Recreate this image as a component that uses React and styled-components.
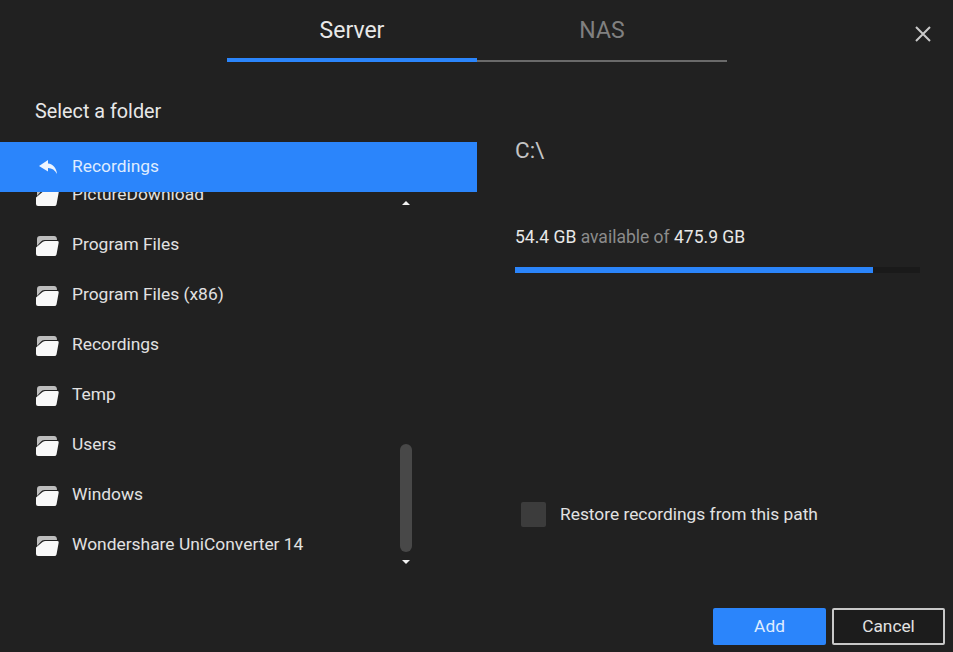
import React from "react";
import styled, { createGlobalStyle } from "styled-components";

const Global = createGlobalStyle`
  html, body { margin: 0; padding: 0; background: #212121; }
  body { font-family: Roboto, "Liberation Sans", sans-serif; }
`;

const Dialog = styled.div`
  position: relative;
  width: 953px;
  height: 652px;
  background: #212121;
  color: #e6e6e6;
  overflow: hidden;
  display: flex;
  flex-direction: column;
`;

const Tabs = styled.div`
  display: flex;
  width: 500px;
  height: 62px;
  margin-left: 227px;
  flex: none;
`;

const Tab = styled.div`
  width: 250px;
  height: 62px;
  box-sizing: border-box;
  padding-top: 17px;
  text-align: center;
  font-size: 23px;
  line-height: 28px;
  color: ${(p) => (p.$active ? "#e8e8e8" : "#808080")};
  border-bottom: ${(p) => (p.$active ? "4px solid #2b85fb" : "2px solid #6a6a6a")};
`;

const Close = styled.button`
  position: absolute;
  top: 25px;
  right: 21px;
  width: 18px;
  height: 18px;
  padding: 0;
  border: 0;
  background: none;
  display: block;
`;

const Body = styled.div`
  display: flex;
  flex: 1;
  min-height: 0;
`;

const Left = styled.div`
  width: 477px;
  flex: none;
  display: flex;
  flex-direction: column;
`;

const Heading = styled.div`
  padding: 38px 0 0 35px;
  height: 42px;
  font-size: 19.8px;
  line-height: 24px;
  color: #e8e8e8;
  flex: none;
`;

const BackRow = styled.div`
  height: 50px;
  box-sizing: border-box;
  padding: 0 0 2px 37px;
  background: #2b85fb;
  display: flex;
  align-items: center;
  gap: 14px;
  font-size: 17.4px;
  color: #dfecff;
  flex: none;
  position: relative;
  z-index: 1;
`;

const ListWrap = styled.div`
  position: relative;
  height: 381px;
  overflow: hidden;
  flex: none;
`;

const List = styled.div`
  margin-top: -23px;
`;

const Row = styled.div`
  height: 50px;
  display: flex;
  align-items: center;
  padding-left: 35px;
  gap: 13px;
  font-size: 17.4px;
  color: #e2e2e2;
`;

const ScrollThumb = styled.div`
  position: absolute;
  left: 400px;
  top: 252px;
  width: 12px;
  height: 108px;
  border-radius: 6px;
  background: #484848;
`;

const ArrowUp = styled.div`
  position: absolute;
  left: 402px;
  top: 9px;
  width: 0;
  height: 0;
  border-left: 4px solid transparent;
  border-right: 4px solid transparent;
  border-bottom: 4px solid #f2f2f2;
`;

const ArrowDown = styled.div`
  position: absolute;
  left: 402px;
  top: 368px;
  width: 0;
  height: 0;
  border-left: 4px solid transparent;
  border-right: 4px solid transparent;
  border-top: 4px solid #f2f2f2;
`;

const Right = styled.div`
  flex: 1;
  display: flex;
  flex-direction: column;
  padding: 75px 33px 0 38px;
`;

const Path = styled.div`
  font-size: 22.5px;
  line-height: 26px;
  color: #c4c4c4;
`;

const Usage = styled.div`
  margin-top: 62px;
  font-size: 17.5px;
  line-height: 24px;
  color: #e8e8e8;
`;

const Muted = styled.span`
  color: #8c8c8c;
`;

const Bar = styled.div`
  margin-top: 18px;
  height: 6px;
  background: #1a1a1a;
`;

const BarFill = styled.div`
  height: 100%;
  background: #2b85fb;
`;

const Restore = styled.label`
  margin: 229px 0 0 6px;
  display: flex;
  align-items: flex-start;
  gap: 14px;
  font-size: 17.35px;
  line-height: 24px;
  color: #e2e2e2;
`;

const Box = styled.span`
  width: 25px;
  height: 25px;
  border-radius: 2px;
  background: #3c3c3c;
  flex: none;
`;

const Footer = styled.div`
  position: absolute;
  right: 8px;
  bottom: 7px;
  display: flex;
  gap: 6px;
`;

const Button = styled.button`
  width: 113px;
  height: 37px;
  box-sizing: border-box;
  border-radius: 2px;
  font: 17.3px Roboto, "Liberation Sans", sans-serif;
  padding: 0 0 2px;
  color: ${(p) => (p.$primary ? "#dfecff" : "#e2e2e2")};
  background: ${(p) => (p.$primary ? "#2b85fb" : "#1c1c1c")};
  border: ${(p) => (p.$primary ? "0" : "2px solid #c8c8c8")};
`;

const IconSvg = styled.svg`
  flex: none;
  display: block;
`;

const FolderIcon = () => (
  <IconSvg width="24" height="24" viewBox="0 0 24 24">
    <path fill="#bdbdbd" d="M2 7Q2 4 5 4H19Q22 4 22 8H9.500Q7 8 5.500 10L2 14z" />
    <path fill="#f8f8f8" d="M10.500 9H22.500Q24 9 23.700 10.500L21.500 22.500Q21 24 19.500 24H3Q1 24 1 22V15.500L7.500 10Q9 9 10.500 9z" />
  </IconSvg>
);

const BackIcon = () => (
  <IconSvg width="21" height="16" viewBox="0 0 21 16">
    <path fill="#eef5ff" d="M11 2 2 8 11 13.500V10C15 10 18 12 20 16 19.500 10 16 6 11 5.500z" />
  </IconSvg>
);

const folders = [
  "PictureDownload",
  "Program Files",
  "Program Files (x86)",
  "Recordings",
  "Temp",
  "Users",
  "Windows",
  "Wondershare UniConverter 14",
];

export default function App() {
  return (
    <Dialog>
      <Global />
      <Tabs>
        <Tab $active>Server</Tab>
        <Tab>NAS</Tab>
      </Tabs>
      <Close aria-label="Close">
        <svg width="18" height="18" viewBox="0 0 18 18">
          <path d="M2 2 16 16M16 2 2 16" stroke="#c9c9c9" strokeWidth="2" fill="none" />
        </svg>
      </Close>
      <Body>
        <Left>
          <Heading>Select a folder</Heading>
          <BackRow>
            <BackIcon />
            Recordings
          </BackRow>
          <ListWrap>
            <List>
              {folders.map((f) => (
                <Row key={f}>
                  <FolderIcon />
                  {f}
                </Row>
              ))}
            </List>
            <ArrowUp />
            <ScrollThumb />
            <ArrowDown />
          </ListWrap>
        </Left>
        <Right>
          <Path>C:\</Path>
          <Usage>
            54.4 GB <Muted>available of</Muted> 475.9 GB
          </Usage>
          <Bar>
            <BarFill style={{ width: `${(358 / 405) * 100}%` }} />
          </Bar>
          <Restore>
            <Box />
            Restore recordings from this path
          </Restore>
        </Right>
      </Body>
      <Footer>
        <Button $primary>Add</Button>
        <Button>Cancel</Button>
      </Footer>
    </Dialog>
  );
}
